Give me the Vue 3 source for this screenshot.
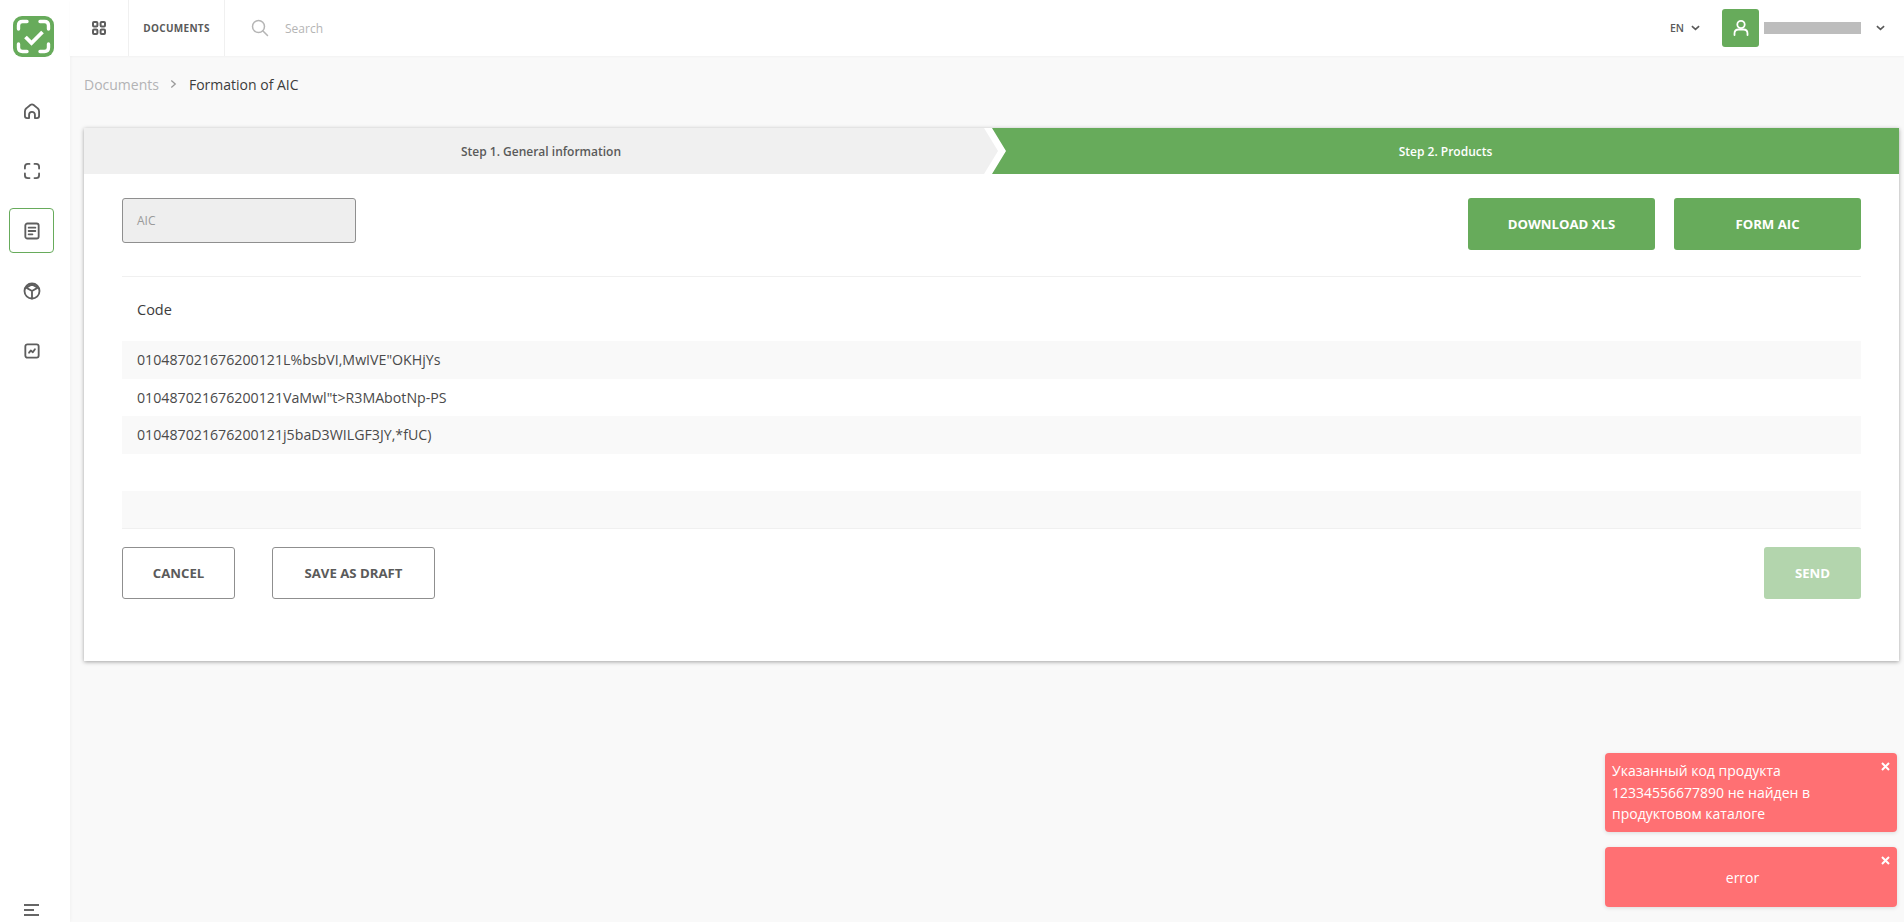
<template>
  <div class="layout">
    <!-- Sidebar -->
    <aside class="sidebar">
      <div class="logo">
        <svg viewBox="0 0 41 41" width="41" height="41">
          <rect x="0" y="0" width="41" height="41" rx="9" fill="#67ab5b" />
          <path d="M5.500 13V9.500Q5.500 5.500 9.500 5.500H14M27 5.500H31.500Q35.500 5.500 35.500 9.500V13M35.500 28V31.500Q35.500 35.500 31.500 35.500H27M14 35.500H9.500Q5.500 35.500 5.500 31.500V28" fill="none" stroke="#fff" stroke-width="3.400" stroke-linecap="round" />
          <path d="M12.500 21L18.500 27L29.500 16" fill="none" stroke="#fff" stroke-width="3.800" />
        </svg>
      </div>
      <nav class="side-nav">
        <a class="side-item">
          <svg viewBox="0 0 24 24" width="20" height="20" class="side-icon">
            <path d="M3.500 12.500Q3.500 10 5.500 8.500L10 4.800Q12 3.200 14 4.800L18.500 8.500Q20.500 10 20.500 12.500V18Q20.500 20.500 18 20.500H15.500V16.500A3.500 3.500 0 0 0 8.500 16.500V20.500H6Q3.500 20.500 3.500 18Z" />
          </svg>
        </a>
        <a class="side-item">
          <svg viewBox="0 0 24 24" width="20" height="20" class="side-icon">
            <path d="M3.500 9V7Q3.500 3.500 7 3.500H9M15 3.500H17Q20.500 3.500 20.500 7V9M20.500 15V17Q20.500 20.500 17 20.500H15M9 20.500H7Q3.500 20.500 3.500 17V15" />
          </svg>
        </a>
        <a class="side-item active">
          <svg viewBox="0 0 24 24" width="20" height="20" class="side-icon">
            <rect x="4" y="3" width="16" height="18" rx="2.500" />
            <path d="M8 8H16M8 12H16M8 16H12.500" />
          </svg>
        </a>
        <a class="side-item">
          <svg viewBox="0 0 24 24" width="20" height="20" class="side-icon">
            <circle cx="12" cy="12" r="9" />
            <path d="M5 8L12 4L19 8L12 12ZM12 12V21" />
          </svg>
        </a>
        <a class="side-item">
          <svg viewBox="0 0 24 24" width="20" height="20" class="side-icon">
            <rect x="4" y="4" width="16" height="16" rx="2.500" />
            <path d="M8.500 14L10.500 11.500L13 13.500L15.500 10" />
          </svg>
        </a>
      </nav>
      <div class="burger">
        <span class="burger-line"></span>
        <span class="burger-line short"></span>
        <span class="burger-line"></span>
      </div>
    </aside>

    <div class="main">
      <!-- Top bar -->
      <header class="topbar">
        <div class="top-cell grid-cell">
          <svg viewBox="0 0 14 14" width="14" height="14" fill="none" stroke="#5e5e5e" stroke-width="2">
            <rect x="1" y="1" width="4.400" height="4.400" rx="1" />
            <rect x="8.600" y="1" width="4.400" height="4.400" rx="1" />
            <rect x="1" y="8.600" width="4.400" height="4.400" rx="1" />
            <rect x="8.600" y="8.600" width="4.400" height="4.400" rx="1" />
          </svg>
        </div>
        <div class="top-cell doc-cell">DOCUMENTS</div>
        <div class="search">
          <svg viewBox="0 0 18 18" width="18" height="18" fill="none" stroke="#b5b5b5" stroke-width="1.500">
            <circle cx="7.500" cy="7.500" r="6" />
            <path d="M12 12L16.500 16.500" stroke-linecap="round" />
          </svg>
          <span class="search-text">Search</span>
        </div>
        <div class="lang">
          EN
          <svg viewBox="0 0 10 6" width="9" height="6" class="chev"><path d="M1 1L5 4.500L9 1" /></svg>
        </div>
        <div class="avatar">
          <svg viewBox="0 0 20 20" width="20" height="20" fill="none" stroke="#fff" stroke-width="1.800">
            <circle cx="10" cy="6.500" r="3.700" />
            <path d="M3.500 17V15.500Q3.500 11.500 7.500 11.500H12.500Q16.500 11.500 16.500 15.500V17" stroke-linecap="round" />
          </svg>
        </div>
        <div class="user-name"></div>
        <svg viewBox="0 0 10 6" width="9" height="6" class="chev user-chev"><path d="M1 1L5 4.500L9 1" /></svg>
      </header>

      <div class="content">
        <div class="crumbs">
          <span class="crumb-link">Documents</span>
          <svg viewBox="0 0 8 10" width="7" height="10" class="crumb-sep"><path d="M1.500 1L6 5L1.500 9" /></svg>
          <span class="crumb-current">Formation of AIC</span>
        </div>

        <section class="card">
          <div class="steps">
            <div class="step step-done">Step 1. General information</div>
            <div class="step step-active">Step 2. Products</div>
          </div>

          <div class="card-body">
            <div class="form-row">
              <div class="aic-input">AIC</div>
              <div class="form-actions">
                <button class="btn btn-green btn-download">DOWNLOAD XLS</button>
                <button class="btn btn-green btn-form">FORM AIC</button>
              </div>
            </div>

            <div class="code-table">
              <div class="code-head">Code</div>
              <div v-for="(row, i) in rows" :key="i" class="code-row">{{ row }}</div>
            </div>

            <div class="footer-row">
              <button class="btn btn-outline btn-cancel">CANCEL</button>
              <button class="btn btn-outline btn-draft">SAVE AS DRAFT</button>
              <button class="btn btn-green btn-send">SEND</button>
            </div>
          </div>
        </section>
      </div>
    </div>

    <!-- Toasts -->
    <div class="toasts">
      <div class="toast toast-long">
        <svg viewBox="0 0 9 9" width="9" height="9" class="toast-close"><path d="M1 1L8 8M8 1L1 8" /></svg>
        Указанный код продукта 12334556677890 не найден в продуктовом каталоге
      </div>
      <div class="toast toast-short">
        <svg viewBox="0 0 9 9" width="9" height="9" class="toast-close"><path d="M1 1L8 8M8 1L1 8" /></svg>
        error
      </div>
    </div>
  </div>
</template>

<script setup>
const rows = [
  '010487021676200121L%bsbVI,MwIVE"OKHjYs',
  '010487021676200121VaMwl"t>R3MAbotNp-PS',
  '010487021676200121j5baD3WILGF3JY,*fUC)',
  '',
  ''
]
</script>

<style>
html,
body {
  margin: 0;
  background: #f9f9f9;
  overflow: hidden;
}
</style>

<style scoped>
.layout {
  position: relative;
  display: flex;
  height: 922px;
  font-family: "Open Sans", "Noto Sans", sans-serif;
  color: #3c3c3c;
  background: #f9f9f9;
  overflow: hidden;
}

/* Sidebar */
.sidebar {
  width: 70px;
  flex-shrink: 0;
  display: flex;
  flex-direction: column;
  background: #fff;
  box-shadow: 1px 0 3px rgba(0, 0, 0, 0.03);
}

.logo {
  height: 41px;
  margin: 16px 0 0 13px;
}

.logo svg {
  display: block;
}

.side-nav {
  display: flex;
  flex-direction: column;
  gap: 15px;
  margin: 31px 0 0 9px;
}

.side-item {
  width: 45px;
  height: 45px;
  display: flex;
  align-items: center;
  justify-content: center;
  box-sizing: border-box;
  border: 1px solid transparent;
  border-radius: 4px;
}

.side-item.active {
  border-color: #67ab5b;
}

.side-icon {
  fill: none;
  stroke: #5e5e5e;
  stroke-width: 2.200;
  stroke-linecap: round;
  stroke-linejoin: round;
}

.burger {
  margin: auto 0 6px 24px;
  width: 15px;
  display: flex;
  flex-direction: column;
  gap: 3px;
}

.burger-line {
  height: 2px;
  background: #666;
}

.burger-line.short {
  width: 10px;
}

/* Top bar */
.main {
  flex: 1;
  min-width: 0;
}

.topbar {
  height: 56px;
  display: flex;
  align-items: center;
  background: #fff;
  box-shadow: 0 1px 2px rgba(0, 0, 0, 0.03);
  padding-right: 19px;
}

.top-cell {
  height: 56px;
  display: flex;
  align-items: center;
  justify-content: center;
  box-sizing: border-box;
  border-right: 1px solid #f0f0f0;
}

.grid-cell {
  width: 59px;
  border-left: 0;
}

.doc-cell {
  width: 96px;
  font-size: 10px;
  font-weight: 700;
  letter-spacing: 0.3px;
  color: #5a5a5a;
}

.search {
  flex: 1;
  display: flex;
  align-items: center;
  gap: 16px;
  padding-left: 26px;
}

.search-text {
  font-size: 12px;
  color: #b5b5b5;
}

.lang {
  display: flex;
  align-items: center;
  gap: 7px;
  font-size: 10.500px;
  font-weight: 600;
  color: #5a5a5a;
  margin-right: 22px;
}

.chev {
  fill: none;
  stroke: #5a5a5a;
  stroke-width: 1.800;
}

.avatar {
  width: 37px;
  height: 38px;
  border-radius: 3px;
  background: #67ab5b;
  display: flex;
  align-items: center;
  justify-content: center;
}

.user-name {
  width: 97px;
  height: 12px;
  margin-left: 5px;
  background: #bdbdbd;
}

.user-chev {
  margin-left: 15px;
}

/* Content */
.content {
  padding: 0 5px 0 14px;
}

.crumbs {
  height: 24px;
  padding: 16px 0 32px;
  display: flex;
  align-items: center;
  font-size: 14px;
}

.crumb-link {
  color: #b3b3b5;
}

.crumb-sep {
  margin: 0 12px 0 11px;
  fill: none;
  stroke: #9a9a9a;
  stroke-width: 1.500;
}

.crumb-current {
  color: #3c3c3c;
}

.card {
  background: #fff;
  box-shadow: 0 1px 4px rgba(0, 0, 0, 0.35);
}

.steps {
  display: flex;
  height: 46px;
  font-size: 12px;
  font-weight: 600;
}

.step {
  display: flex;
  align-items: center;
  justify-content: center;
}

.step-done {
  width: 914px;
  color: #5a5a5a;
  background: #f0f0f0;
  clip-path: polygon(0 0, calc(100% - 14px) 0, 100% 50%, calc(100% - 14px) 100%, 0 100%);
}

.step-active {
  flex: 1;
  margin-left: -6px;
  color: #fff;
  background: #67ab5b;
  clip-path: polygon(0 0, 100% 0, 100% 100%, 0 100%, 14px 50%);
}

.card-body {
  padding: 24px 38px 62px;
}

.form-row {
  display: flex;
  justify-content: space-between;
  padding-bottom: 26px;
  border-bottom: 1px solid #f0f0f0;
}

.aic-input {
  width: 234px;
  height: 45px;
  box-sizing: border-box;
  padding: 0 14px;
  display: flex;
  align-items: center;
  font-size: 12px;
  color: #9a9a9a;
  background: #eee;
  border: 1px solid #8f8f8f;
  border-radius: 3px;
}

.form-actions {
  display: flex;
  gap: 19px;
}

.btn {
  height: 52px;
  box-sizing: border-box;
  border-radius: 3px;
  font-family: inherit;
  font-size: 13.200px;
  font-weight: 700;
  padding: 0;
}

.btn-green {
  color: #fff;
  background: #67ab5b;
  border: none;
}

.btn-download {
  width: 187px;
}

.btn-form {
  width: 187px;
}

.code-head {
  height: 64px;
  display: flex;
  align-items: center;
  padding-left: 15px;
  font-size: 14.500px;
  font-weight: 500;
  color: #3c3c3c;
}

.code-row {
  height: 37.500px;
  box-sizing: border-box;
  padding-left: 15px;
  display: flex;
  align-items: center;
  font-size: 14.200px;
  color: #4a4a4a;
}

.code-row:nth-child(even) {
  background: #f9f9f9;
}

.code-row:last-child {
  border-bottom: 1px solid #f0f0f0;
}

.footer-row {
  display: flex;
  margin-top: 18px;
}

.btn-outline {
  color: #5a5a5a;
  background: #fff;
  border: 1px solid #8f8f8f;
}

.btn-cancel {
  width: 113px;
}

.btn-draft {
  width: 163px;
  margin-left: 37px;
}

.btn-send {
  width: 97px;
  margin-left: auto;
  background: #b3d5ad;
}

/* Toasts */
.toasts {
  position: absolute;
  right: 7px;
  top: 753px;
  width: 292px;
  display: flex;
  flex-direction: column;
  gap: 15px;
}

.toast {
  position: relative;
  box-sizing: border-box;
  background: #ff7073;
  border-radius: 4px;
  color: #fff;
  font-size: 14px;
  box-shadow: 0 1px 4px rgba(0, 0, 0, 0.12);
}

.toast-long {
  height: 79px;
  padding: 7px 30px 0 7px;
  line-height: 21.500px;
}

.toast-short {
  height: 60px;
  display: flex;
  align-items: center;
  justify-content: center;
  padding: 0 22px 0 5px;
}

.toast-close {
  position: absolute;
  top: 9px;
  right: 7px;
  fill: none;
  stroke: #fff;
  stroke-width: 2;
}
</style>
